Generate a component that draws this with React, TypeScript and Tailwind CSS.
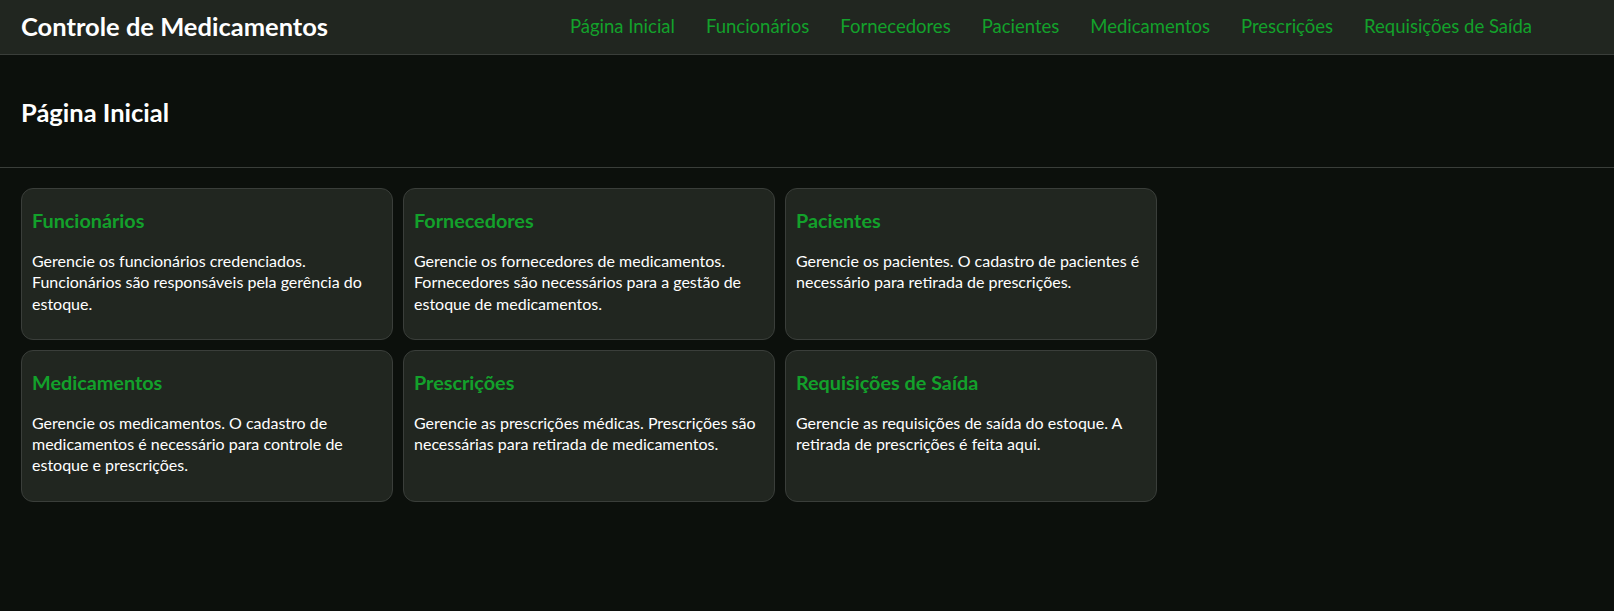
const links = [
  "Página Inicial",
  "Funcionários",
  "Fornecedores",
  "Pacientes",
  "Medicamentos",
  "Prescrições",
  "Requisições de Saída",
];

const cards = [
  {
    title: "Funcionários",
    body: "Gerencie os funcionários credenciados. Funcionários são responsáveis pela gerência do estoque.",
  },
  {
    title: "Fornecedores",
    body: "Gerencie os fornecedores de medicamentos. Fornecedores são necessários para a gestão de estoque de medicamentos.",
  },
  {
    title: "Pacientes",
    body: "Gerencie os pacientes. O cadastro de pacientes é necessário para retirada de prescrições.",
  },
  {
    title: "Medicamentos",
    body: "Gerencie os medicamentos. O cadastro de medicamentos é necessário para controle de estoque e prescrições.",
  },
  {
    title: "Prescrições",
    body: "Gerencie as prescrições médicas. Prescrições são necessárias para retirada de medicamentos.",
  },
  {
    title: "Requisições de Saída",
    body: "Gerencie as requisições de saída do estoque. A retirada de prescrições é feita aqui.",
  },
];

export default function App() {
  return (
    <div className="min-h-screen bg-[#0c100c] font-['Segoe_UI','Lato',sans-serif] text-white">
      <header className="flex h-[55px] items-center justify-between border-b border-[#3a3e3a] bg-[#212620] pl-[21px] pr-[82px]">
        <h1 className="text-[25.5px] font-bold leading-none">Controle de Medicamentos</h1>
        <nav className="flex gap-[31px]">
          {links.map((l) => (
            <a key={l} href="#" className="text-[18.5px] text-[#13a12b]">
              {l}
            </a>
          ))}
        </nav>
      </header>

      <section className="h-[113px] border-b border-[#3a3e3a] px-[21px] pt-[42px]">
        <h2 className="text-[25.5px] font-bold leading-[30px]">Página Inicial</h2>
      </section>

      <main className="grid grid-cols-[repeat(3,372px)] gap-x-[10px] gap-y-[10px] px-[21px] pt-[20px]">
        {cards.map((c) => (
          <div
            key={c.title}
            className="rounded-[12px] border border-[#3a3e3a] bg-[#212620] px-[10px] pt-[19px] pb-[25px]"
          >
            <h3 className="text-[19.8px] font-bold leading-[25px] text-[#13a12b]">{c.title}</h3>
            <p className="mt-[17px] text-[16px] leading-[21.3px]">{c.body}</p>
          </div>
        ))}
      </main>
    </div>
  );
}
